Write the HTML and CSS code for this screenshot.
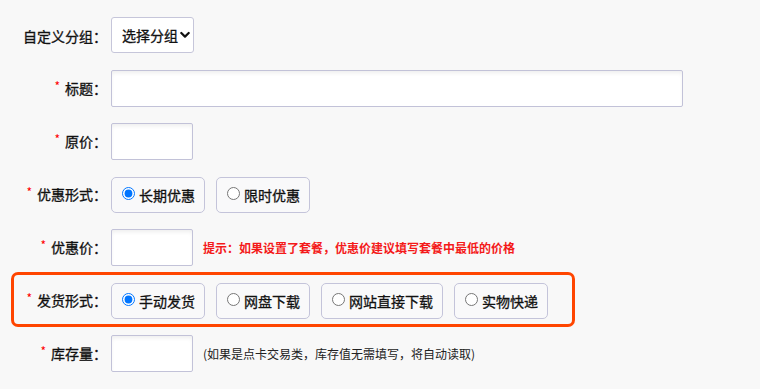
FILE: index.html
```html
<!DOCTYPE html>
<html lang="zh-CN">
<head>
<meta charset="utf-8">
<title>商品设置</title>
<link rel="stylesheet" href="styles.css">
</head>
<body>
<form class="form">
  <div class="row">
    <label class="label">自定义分组：</label>
    <select class="select">
      <option>选择分组</option>
    </select>
  </div>
  <div class="row">
    <label class="label"><span class="req">*</span>标题：</label>
    <input class="input input-wide" type="text">
  </div>
  <div class="row">
    <label class="label"><span class="req">*</span>原价：</label>
    <input class="input input-small" type="text">
  </div>
  <div class="row">
    <label class="label"><span class="req">*</span>优惠形式：</label>
    <div class="options">
      <label class="option"><input type="radio" name="discount" checked><span>长期优惠</span></label>
      <label class="option"><input type="radio" name="discount"><span>限时优惠</span></label>
    </div>
  </div>
  <div class="row">
    <label class="label"><span class="req">*</span>优惠价：</label>
    <input class="input input-small" type="text">
    <span class="hint hint-red">提示：如果设置了套餐，优惠价建议填写套餐中最低的价格</span>
  </div>
  <div class="row row-highlight">
    <label class="label"><span class="req">*</span>发货形式：</label>
    <div class="options">
      <label class="option"><input type="radio" name="ship" checked><span>手动发货</span></label>
      <label class="option"><input type="radio" name="ship"><span>网盘下载</span></label>
      <label class="option"><input type="radio" name="ship"><span>网站直接下载</span></label>
      <label class="option"><input type="radio" name="ship"><span>实物快递</span></label>
    </div>
  </div>
  <div class="row">
    <label class="label"><span class="req">*</span>库存量：</label>
    <input class="input input-small" type="text">
    <span class="hint">(如果是点卡交易类，库存值无需填写，将自动读取)</span>
  </div>
</form>
</body>
</html>
```

FILE: styles.css
```css
* {
  box-sizing: border-box;
}

html, body {
  margin: 0;
  padding: 0;
  background: #f8f8f8;
}

body {
  font-family: "Noto Sans CJK SC", "Noto Sans", "Liberation Sans", sans-serif;
  font-size: 14px;
  color: #111;
}

.form {
  display: flex;
  flex-direction: column;
  gap: 16px;
  padding-top: 17px;
}

.row {
  display: flex;
  align-items: center;
  height: 37px;
  padding-left: 14px;
}

.label {
  width: 93px;
  flex: none;
  text-align: right;
  line-height: 20px;
  white-space: nowrap;
  margin-right: 4px;
  -webkit-text-stroke: 0.3px #111;
}

.req {
  color: #f00;
  font-size: 12px;
  position: relative;
  top: -3px;
  margin-right: 5px;
  -webkit-text-stroke: 0;
}

.select {
  -webkit-appearance: none;
  appearance: none;
  width: 83px;
  height: 36px;
  margin: 0 0 1px 0;
  padding: 0 0 0 10px;
  border: 1px solid #c6c6da;
  border-radius: 3px;
  background-color: #fff;
  background-image: url("data:image/svg+xml,%3Csvg xmlns='http://www.w3.org/2000/svg' width='10' height='8' viewBox='0 0 10 8'%3E%3Cpath d='M1.3 2 L5 5.6 L8.7 2' fill='none' stroke='%23111' stroke-width='2.2' stroke-linecap='round' stroke-linejoin='round'/%3E%3C/svg%3E");
  background-repeat: no-repeat;
  background-position: right 3px center;
  font-family: inherit;
  font-size: 14px;
  color: #111;
  -webkit-text-stroke: 0.3px #111;
}

.input {
  height: 37px;
  margin: 0;
  padding: 0 6px;
  border: 1px solid #c2c2d8;
  border-radius: 2px;
  background: #fff;
  box-shadow: inset 0 3px 4px -1px rgba(0, 0, 0, 0.07);
  font-family: inherit;
  font-size: 14px;
}

.input-wide {
  width: 572px;
}

.input-small {
  width: 82px;
}

.hint {
  margin-left: 10px;
  font-size: 12px;
  color: #222;
  white-space: nowrap;
}

.hint-red {
  color: #f41a1a;
  font-weight: bold;
}

.options {
  display: flex;
  gap: 11px;
}

.option {
  display: flex;
  align-items: center;
  height: 36px;
  padding: 0 9px 0 10px;
  border: 1px solid #c4c4da;
  border-radius: 5px;
  background: #f9f9fa;
  white-space: nowrap;
  -webkit-text-stroke: 0.3px #111;
}

.option input {
  width: 13px;
  height: 13px;
  margin: 0 4px 2px 0;
}

.row-highlight {
  align-self: flex-start;
  height: 55px;
  margin-top: -10px;
  margin-bottom: -8px;
  margin-left: 11px;
  padding: 7px 24px 5px 0;
  border: 3px solid #ff4500;
  border-radius: 7px;
}
```
